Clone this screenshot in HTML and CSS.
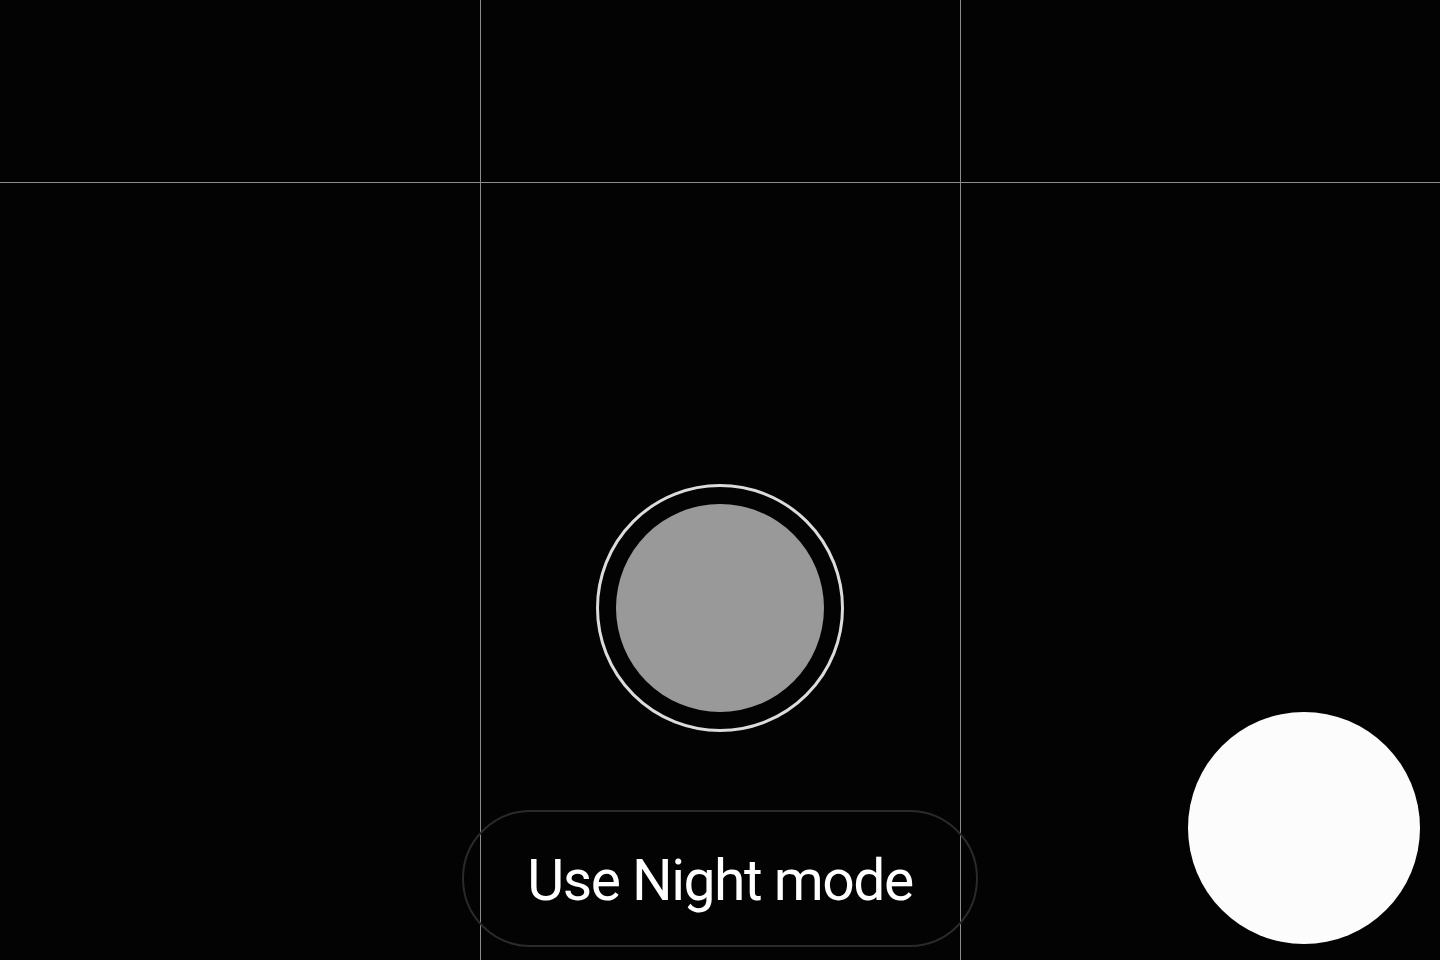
FILE: index.html
```html
<!DOCTYPE html>
<html lang="en">
<head>
<meta charset="utf-8">
<title>Camera</title>
<link rel="stylesheet" href="styles.css">
</head>
<body>
<main class="viewfinder">
  <div class="grid">
    <div class="cell top"></div>
    <div class="cell top"></div>
    <div class="cell top last"></div>
    <div class="cell"></div>
    <div class="cell"></div>
    <div class="cell last"></div>
  </div>
  <div class="focus-ring"><div class="focus-dot"></div></div>
  <button class="night-pill">Use Night mode</button>
  <button class="shutter" aria-label="Shutter"></button>
</main>
</body>
</html>
```
FILE: styles.css
```css
* { box-sizing: border-box; }
html, body {
  margin: 0;
  padding: 0;
  background: #030303;
  width: 1440px;
  height: 960px;
  overflow: hidden;
  font-family: Roboto, "Noto Sans", sans-serif;
}
.viewfinder {
  position: relative;
  width: 1440px;
  height: 960px;
  background: #030303;
}
.grid {
  display: grid;
  grid-template-columns: 481px 480px 479px;
  grid-template-rows: 183px 777px;
  width: 100%;
  height: 100%;
}
.cell {
  border-right: 1px solid #8c8c8c;
}
.cell.top {
  border-bottom: 1px solid #8c8c8c;
}
.cell.last {
  border-right: none;
}
.focus-ring {
  position: absolute;
  left: 596px;
  top: 484px;
  width: 248px;
  height: 248px;
  border-radius: 50%;
  border: 3px solid #dcdcdc;
  display: flex;
  align-items: center;
  justify-content: center;
}
.focus-dot {
  width: 208px;
  height: 208px;
  border-radius: 50%;
  background: #999999;
}
.night-pill {
  position: absolute;
  left: 462px;
  top: 810px;
  width: 516px;
  height: 137px;
  border-radius: 69px;
  border: 2px solid #2a2a2a;
  background: transparent;
  color: #ffffff;
  font-family: Roboto, "Noto Sans", sans-serif;
  font-size: 57px;
  letter-spacing: -1.5px;
  font-weight: 400;
  padding: 4px 0 0 0;
  display: flex;
  align-items: center;
  justify-content: center;
}
.shutter {
  position: absolute;
  left: 1188px;
  top: 712px;
  width: 232px;
  height: 232px;
  border-radius: 50%;
  border: none;
  background: #fcfcfc;
  padding: 0;
}
```
